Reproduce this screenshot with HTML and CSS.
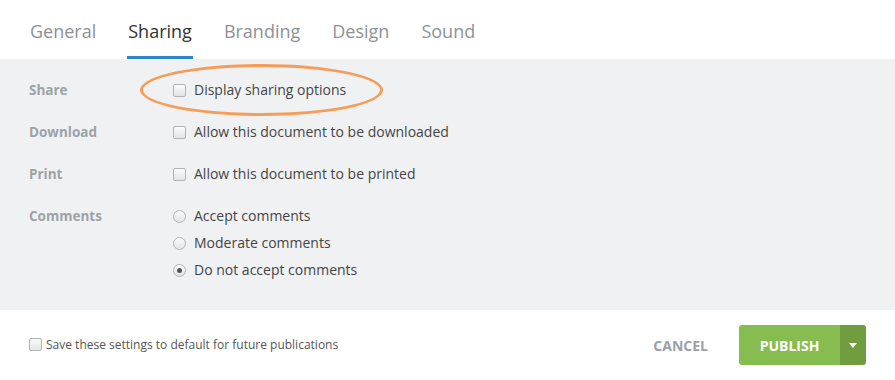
FILE: index.html
```html
<!DOCTYPE html>
<html lang="en">
<head>
  <meta charset="UTF-8">
  <title>Publication Settings - Sharing</title>
  <link rel="stylesheet" href="styles.css">
</head>
<body>
  <nav class="tabs">
    <a class="tab">General</a>
    <a class="tab active">Sharing</a>
    <a class="tab">Branding</a>
    <a class="tab">Design</a>
    <a class="tab">Sound</a>
  </nav>

  <div class="panel">
    <div class="row">
      <div class="label">Share</div>
      <div class="options">
        <label class="option highlight">
          <input type="checkbox"> Display sharing options
          <span class="ring"></span>
        </label>
      </div>
    </div>

    <div class="row">
      <div class="label">Download</div>
      <div class="options">
        <label class="option"><input type="checkbox"> Allow this document to be downloaded</label>
      </div>
    </div>

    <div class="row">
      <div class="label">Print</div>
      <div class="options">
        <label class="option"><input type="checkbox"> Allow this document to be printed</label>
      </div>
    </div>

    <div class="row">
      <div class="label">Comments</div>
      <div class="options radios">
        <label class="option"><input type="radio" name="comments"> Accept comments</label>
        <label class="option"><input type="radio" name="comments"> Moderate comments</label>
        <label class="option"><input type="radio" name="comments" checked> Do not accept comments</label>
      </div>
    </div>
  </div>

  <footer class="footer">
    <label class="save"><input type="checkbox"> Save these settings to default for future publications</label>
    <div class="actions">
      <button class="cancel">CANCEL</button>
      <div class="publish">
        <button class="publish-main">PUBLISH</button>
        <button class="publish-more"><span class="caret"></span></button>
      </div>
    </div>
  </footer>
</body>
</html>
```

FILE: styles.css
```css
body {
  margin: 0;
  font-family: "Open Sans", Arial, sans-serif;
  background: #fff;
  color: #444;
  width: 895px;
  height: 380px;
  overflow: hidden;
}

.tabs {
  display: flex;
  gap: 30px;
  padding-left: 29px;
  height: 59px;
  box-sizing: border-box;
}

.tab {
  font-size: 18px;
  color: #8d9296;
  padding: 0 1px;
  height: 59px;
  box-sizing: border-box;
  border-bottom: 3px solid transparent;
  line-height: 62px;
}

.tab.active {
  color: #333;
  border-bottom-color: #2b87c8;
}

.panel {
  background: #f0f1f3;
  height: 251px;
  box-sizing: border-box;
  padding: 21px 0 0 29px;
}

.row {
  display: grid;
  grid-template-columns: 144px auto;
  margin-bottom: 22px;
}

.label {
  font-size: 13.5px;
  font-weight: 700;
  color: #9ca2a7;
  line-height: 20px;
}

.options {
  display: flex;
  flex-direction: column;
  gap: 7px;
}

.option {
  display: flex;
  align-items: center;
  gap: 8px;
  font-size: 14px;
  line-height: 20px;
  color: #454545;
  position: relative;
  width: max-content;
}

input[type="checkbox"],
input[type="radio"] {
  appearance: none;
  -webkit-appearance: none;
  margin: 0;
  width: 13px;
  height: 13px;
  border: 1px solid #b3b3b3;
  background: linear-gradient(#fbfbfb, #e4e4e4);
  box-sizing: border-box;
  border-radius: 2px;
  flex: none;
}

input[type="radio"] {
  border-radius: 50%;
  display: grid;
  place-items: center;
}

input[type="radio"]:checked::after {
  content: "";
  width: 5px;
  height: 5px;
  border-radius: 50%;
  background: #555;
}

.ring {
  position: absolute;
  left: -33px;
  top: -16px;
  width: 237px;
  height: 46px;
  border: 3px solid #f79c57;
  border-radius: 50%;
}

.footer {
  height: 70px;
  display: flex;
  align-items: center;
  justify-content: space-between;
  padding: 0 29px;
}

.save {
  display: flex;
  align-items: center;
  gap: 4px;
  font-size: 12px;
  color: #555;
  margin-top: -2px;
}

.actions {
  display: flex;
  align-items: center;
  gap: 31px;
}

button {
  font-family: inherit;
  border: none;
  cursor: pointer;
  font-size: 14px;
  font-weight: 700;
}

.cancel {
  background: none;
  color: #9aa1a6;
  padding: 0;
}

.publish {
  display: flex;
  height: 40px;
  border-radius: 3px;
  overflow: hidden;
}

.publish-main {
  background: #87bd50;
  color: #fff;
  width: 101px;
}

.publish-more {
  background: #6f9d3f;
  width: 26px;
  display: grid;
  place-items: center;
}

.caret {
  width: 0;
  height: 0;
  border-left: 4px solid transparent;
  border-right: 4px solid transparent;
  border-top: 5px solid #fff;
}
```
